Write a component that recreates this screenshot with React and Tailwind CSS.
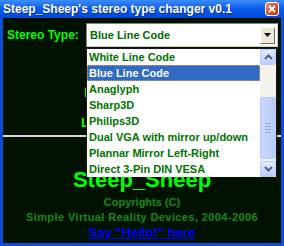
import React from "react";

const items = [
  "White Line Code",
  "Blue Line Code",
  "Anaglyph",
  "Sharp3D",
  "Philips3D",
  "Dual VGA with mirror up/down",
  "Plannar Mirror Left-Right",
  "Direct 3-Pin DIN VESA",
];

function ScrollBtn({ dir }) {
  return (
    <div className="h-[16px] w-[16px] rounded-[2px] border border-[#b7c9f5] bg-gradient-to-b from-[#e1eafe] to-[#bdcefa] flex items-center justify-center">
      <svg width="9" height="6" viewBox="0 0 9 6">
        {dir === "up" ? (
          <path d="M1 5 L4.5 1.5 L8 5" fill="none" stroke="#4d6185" strokeWidth="2" />
        ) : (
          <path d="M1 1 L4.5 4.5 L8 1" fill="none" stroke="#4d6185" strokeWidth="2" />
        )}
      </svg>
    </div>
  );
}

export default function App() {
  return (
    <div
      className="relative w-[284px] h-[246px] overflow-hidden flex flex-col bg-[#0a4fd8]"
      style={{ fontFamily: '"Liberation Sans", Arial, sans-serif' }}
    >
      {/* Title bar */}
      <div className="h-[18px] flex items-center justify-between pl-[3px] pr-[5px] bg-gradient-to-b from-[#3d8cf8] via-[#0858ec] to-[#0349d4]">
        <span className="text-white font-bold text-[12px] leading-[14px] [text-shadow:1px_1px_0_#0a2f96]">
          Steep_Sheep's stereo type changer v0.1
        </span>
        <div className="w-[14px] h-[14px] rounded-[3px] border border-white bg-gradient-to-br from-[#eb8a6c] via-[#d9542f] to-[#b8320f] flex items-center justify-center">
          <svg width="8" height="8" viewBox="0 0 8 8">
            <path d="M1 1 L7 7 M7 1 L1 7" stroke="white" strokeWidth="2" />
          </svg>
        </div>
      </div>

      {/* Body */}
      <div className="flex-1 mx-[3px] mb-[3px] bg-[#011201] flex flex-col">
        <div className="mt-[5px] flex items-center h-[24px]">
          <div className="w-[83px] pl-[4px] text-[#00ff00] font-bold text-[12px] leading-[14px]">
            Stereo Type:
          </div>
          <div className="w-[192px] h-[24px] border-t border-l border-[#808080] border-r border-b border-r-[#d4d0c8] border-b-[#d4d0c8] bg-white flex items-center">
            <div className="flex-1 pl-[3px] text-[#006c00] font-bold text-[11px] leading-[14px]">
              Blue Line Code
            </div>
            <div className="w-[15px] h-[17px] mr-[2px] bg-[#ece9d8] border-t border-l border-white border-r border-b border-r-[#716f64] border-b-[#716f64] flex items-center justify-center">
              <svg width="7" height="4" viewBox="0 0 7 4">
                <path d="M0 0 H7 L3.5 4 Z" fill="#000" />
              </svg>
            </div>
          </div>
        </div>

        <div className="mt-[41px] ml-[82px] w-[1px] h-[9px] bg-[#00ff00]" />
        <div className="mt-[20px] ml-[78px] text-[#00ff00] font-bold text-[13px] leading-[12px] h-[12px]">
          L
        </div>
        <div className="mt-[6px] h-[2px] bg-[#d8d8d8]" />

        <div className="mt-[30px] text-center text-[#00ff00] font-bold text-[22px] leading-[25px]">
          Steep_Sheep
        </div>
        <div className="mt-[4px] text-center text-[#168a16] font-bold text-[11px] leading-[12px]">
          Copyrights (C)
        </div>
        <div className="mt-[3px] text-center text-[#168a16] font-bold text-[11px] leading-[12px] tracking-[0.4px]">
          Simple Virtual Reality Devices, 2004-2006
        </div>
        <div className="mt-[3px] text-center text-[13px] leading-[14px] font-bold">
          <span className="text-[#0000ff] underline decoration-1 underline-offset-[1px]">Say "Hello!" here</span>
        </div>
      </div>

      {/* Dropdown list overlay */}
      <div className="absolute left-[86px] top-[48px] w-[191px] h-[129px] bg-white border-t border-x border-[#1a1a1a] flex">
        <div className="flex-1 flex flex-col">
          {items.map((t, i) => (
            <div
              key={t}
              className={
                i === 1
                  ? "h-[16px] pl-[1px] flex items-center bg-[#316ac5] text-white font-bold text-[11px] border border-dotted border-[#e0a848]"
                  : "h-[16px] pl-[2px] flex items-center text-[#007400] font-bold text-[11px]"
              }
            >
              {t}
            </div>
          ))}
        </div>
        <div className="w-[16px] flex flex-col bg-[#f4f2ea]">
          <ScrollBtn dir="up" />
          <div className="h-[32px]" />
          <div className="h-[62px] rounded-[2px] border border-[#b7c9f5] bg-gradient-to-r from-[#c9d8fd] to-[#b9cbf8] flex flex-col items-center justify-center gap-[2px]">
            <div className="w-[6px] h-[1px] bg-[#8ea4d8]" />
            <div className="w-[6px] h-[1px] bg-[#8ea4d8]" />
            <div className="w-[6px] h-[1px] bg-[#8ea4d8]" />
            <div className="w-[6px] h-[1px] bg-[#8ea4d8]" />
          </div>
          <div className="h-[2px]" />
          <ScrollBtn dir="down" />
        </div>
      </div>
    </div>
  );
}
